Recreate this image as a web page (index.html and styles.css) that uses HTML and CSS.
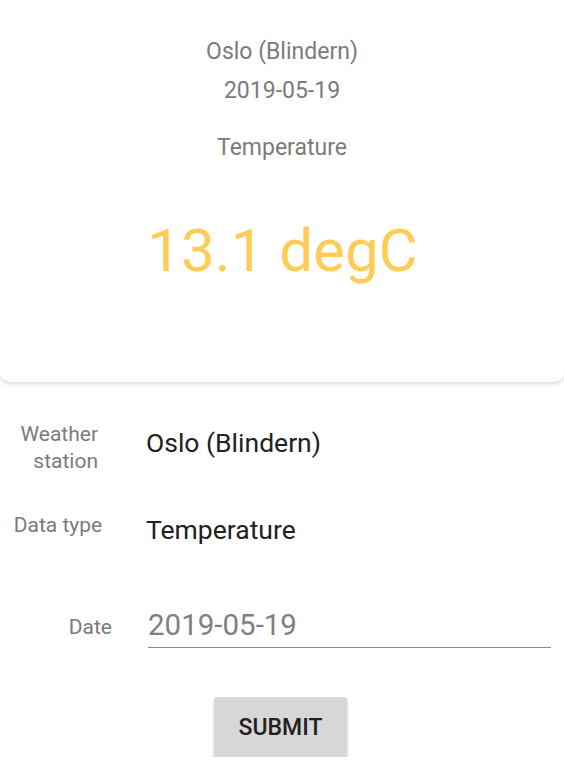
FILE: index.html
```html
<!DOCTYPE html>
<html>
<head>
<meta charset="utf-8">
<link rel="stylesheet" href="styles.css">
</head>
<body>
<div class="card">
  <div class="card-line">Oslo (Blindern)</div>
  <div class="card-line date">2019-05-19</div>
  <div class="card-line dtype">Temperature</div>
  <div class="reading">13.1 degC</div>
</div>
<div class="form">
  <div class="row row-station">
    <div class="label label-station">Weather<br>station</div>
    <div class="value">Oslo (Blindern)</div>
  </div>
  <div class="row row-type">
    <div class="label label-center">Data type</div>
    <div class="value">Temperature</div>
  </div>
  <div class="row row-date">
    <div class="label label-right">Date</div>
    <div class="input">2019-05-19</div>
  </div>
  <div class="actions">
    <button class="submit">SUBMIT</button>
  </div>
</div>
</body>
</html>
```
FILE: styles.css
```css
html, body {
  margin: 0;
  padding: 0;
  background: #ffffff;
  font-family: Roboto, "Liberation Sans", sans-serif;
}
.card {
  background: #ffffff;
  border-radius: 0 0 10px 10px;
  box-shadow: 0 2px 4px rgba(0, 0, 0, 0.16);
  text-align: center;
  padding: 38px 0 95px;
  color: #7b7b7b;
}
.card-line {
  font-size: 23px;
  line-height: 28px;
}
.date { margin-top: 11px; }
.dtype { margin-top: 29px; }
.reading {
  margin-top: 53px;
  font-size: 60px;
  line-height: 72px;
  color: #ffcd57;
  padding-left: 1px;
}
.form {
  padding-top: 39px;
}
.row {
  display: flex;
  align-items: flex-start;
}
.label {
  font-size: 21px;
  line-height: 27px;
  color: #7b7b7b;
}
.label-station {
  width: 98px;
  text-align: right;
}
.label-center {
  width: 116px;
  text-align: center;
}
.value {
  font-size: 26.5px;
  line-height: 31px;
  color: #212121;
}
.row-station .value { margin-left: 48px; margin-top: 6px; }
.row-type { margin-top: 37px; }
.row-type .value { margin-left: 30px; margin-top: 2px; }
.row-date { margin-top: 63px; }
.label-right {
  width: 112px;
  text-align: right;
  margin-top: 6px;
}
.input {
  margin-left: 36px;
  margin-right: 13px;
  flex: 1;
  font-size: 29.5px;
  line-height: 34px;
  color: #808080;
  padding: 0 0 5px 0;
  border-bottom: 1.5px solid #8a8a8a;
}
.actions {
  display: flex;
  justify-content: center;
  margin-top: 49px;
}
.submit {
  width: 133px;
  height: 60px;
  border: none;
  border-radius: 3px;
  background: #d6d7d7;
  box-shadow: 0 2px 3px rgba(0, 0, 0, 0.25);
  font-family: Roboto, "Liberation Sans", sans-serif;
  font-weight: 500;
  font-size: 23px;
  color: #212121;
  padding: 0;
  margin-left: -3px;
}
```
